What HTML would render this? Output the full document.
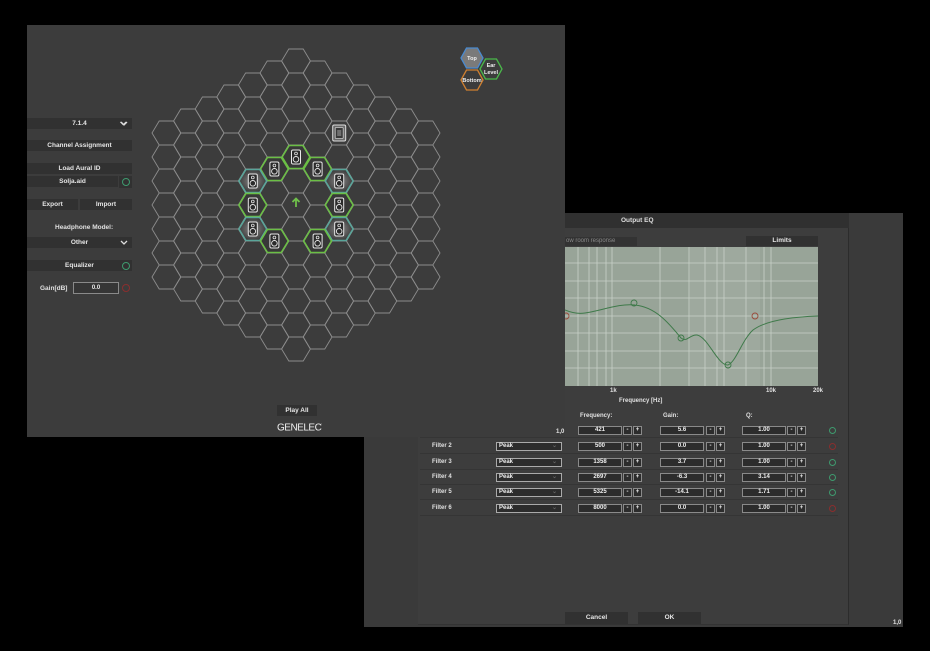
<!DOCTYPE html>
<html><head><meta charset="utf-8"><style>
*{margin:0;padding:0;box-sizing:border-box}
body{width:930px;height:651px;background:#000;position:relative;overflow:hidden;font-family:"Liberation Sans",sans-serif;font-weight:bold;font-size:6.5px;color:#e0e0e0}
.a{position:absolute}
.btn{position:absolute;background:#313131;color:#e6e6e6;text-align:center;line-height:11px;height:11px}
.t{position:absolute;white-space:nowrap}
.in{position:absolute;height:9px;background:#2c2c2c;border:1px solid #8a8a8a;text-align:center;line-height:7px;color:#eee;font-size:6px}
.pm{position:absolute;height:9px;width:9px;background:#2c2c2c;border:1px solid #8a8a8a;text-align:center;line-height:7px;color:#eee;font-size:6px}
.pw{position:absolute;width:8px;height:8px;border:1.3px solid #3e9a6e;border-radius:50%}
.pw.r{border-color:#8a2e2e}
</style></head><body>

<!-- back EQ window -->
<div class="a" style="left:364px;top:213px;width:539px;height:414px;background:#3a3a3a"></div>
<div class="a" style="left:418px;top:213px;width:431px;height:412px;background:#3d3d3d;border-right:1px solid #2c2c2c;border-bottom:1px solid #333"></div>
<div class="a" style="left:418px;top:213px;width:431px;height:15px;background:#303030"></div>
<div class="t" style="left:621px;top:217px">Output EQ</div>
<div class="a" style="left:565px;top:237px;width:72px;height:9px;background:#333"></div>
<div class="t" style="left:566px;top:238px;color:#888;font-weight:normal;font-size:6px">ow room response</div>
<div class="btn" style="left:746px;top:236px;width:72px;height:10px;line-height:10px">Limits</div>
<div class="t" style="left:893px;top:620px;font-size:6px">1,0</div>

<svg class="a" style="left:565px;top:247px" width="253" height="139" viewBox="565 247 253 139">
<rect x="565" y="247" width="253" height="139" fill="#98a498"/>
<rect x="690" y="247" width="70" height="139" fill="#a2ada2" opacity=".6"/>
<g stroke="#c9d1c9" stroke-width="0.8">
<line x1="578" y1="247" x2="578" y2="386"/><line x1="589" y1="247" x2="589" y2="386"/><line x1="597" y1="247" x2="597" y2="386"/><line x1="606" y1="247" x2="606" y2="386"/><line x1="612" y1="247" x2="612" y2="386"/><line x1="660" y1="247" x2="660" y2="386"/><line x1="689" y1="247" x2="689" y2="386"/><line x1="705" y1="247" x2="705" y2="386"/><line x1="717" y1="247" x2="717" y2="386"/><line x1="724" y1="247" x2="724" y2="386"/><line x1="746" y1="247" x2="746" y2="386"/><line x1="764" y1="247" x2="764" y2="386"/><line x1="771" y1="247" x2="771" y2="386"/>
<line x1="565" y1="263" x2="818" y2="263"/><line x1="565" y1="281" x2="818" y2="281"/><line x1="565" y1="298" x2="818" y2="298"/><line x1="565" y1="316" x2="818" y2="316"/><line x1="565" y1="333" x2="818" y2="333"/><line x1="565" y1="351" x2="818" y2="351"/><line x1="565" y1="368" x2="818" y2="368"/>
</g>
<path d="M565 310 C572 313 578 314 585 313 C600 311 620 303 635 305 C655 307 668 322 681 338 C687 343 690 334 697 335 C708 337 718 366 728 365 C736 362 742 340 753 330 C765 321 790 317 818 316" fill="none" stroke="#3f7a4a" stroke-width="1"/>
<g fill="none" stroke-width="0.9">
<circle cx="634" cy="303" r="3" stroke="#3f7a4a"/><circle cx="681" cy="338" r="3" stroke="#3f7a4a"/><circle cx="728" cy="365" r="3" stroke="#3f7a4a"/>
<circle cx="566" cy="316" r="3" stroke="#9a4a3a"/><circle cx="755" cy="316" r="3" stroke="#9a4a3a"/>
</g></svg>
<div class="t" style="left:610px;top:388px;font-size:6px">1k</div>
<div class="t" style="left:766px;top:388px;font-size:6px">10k</div>
<div class="t" style="left:813px;top:388px;font-size:6px">20k</div>
<div class="t" style="left:619px;top:398px;font-size:6px">Frequency [Hz]</div>

<div class="t" style="left:580px;top:413px;font-size:6px">Frequency:</div>
<div class="t" style="left:663px;top:413px;font-size:6px">Gain:</div>
<div class="t" style="left:746px;top:413px;font-size:6px">Q:</div>
<div id="rows"></div>

<div class="btn" style="left:565px;top:612px;width:63px;height:12px">Cancel</div>
<div class="btn" style="left:638px;top:612px;width:63px;height:12px">OK</div>

<!-- front window -->
<div class="a" style="left:27px;top:25px;width:538px;height:412px;background:#3c3c3c"></div>
<div class="btn" style="left:27px;top:118px;width:105px">7.1.4</div>
<div class="t" style="left:120px;top:118px;font-size:8px">&#x2335;</div>
<div class="btn" style="left:27px;top:140px;width:105px">Channel Assignment</div>
<div class="btn" style="left:27px;top:163px;width:105px">Load Aural ID</div>
<div class="btn" style="left:27px;top:176px;width:91px">Solja.aid</div>
<div class="btn" style="left:119px;top:176px;width:13px;height:12px"></div>
<div class="pw" style="left:122px;top:178px"></div>
<div class="btn" style="left:27px;top:199px;width:51px">Export</div>
<div class="btn" style="left:80px;top:199px;width:52px">Import</div>
<div class="t" style="left:55px;top:224px">Headphone Model:</div>
<div class="btn" style="left:27px;top:237px;width:105px">Other</div>
<div class="btn" style="left:27px;top:260px;width:105px">Equalizer</div>
<div class="pw" style="left:122px;top:262px"></div>
<div class="t" style="left:40px;top:285px">Gain[dB]</div>
<div class="in" style="left:73px;top:282px;width:46px;height:12px;line-height:10px;background:#363636">0.0</div>
<div class="pw r" style="left:122px;top:284px"></div>
<svg class="a" style="left:118px;top:118px" width="12" height="140"><path d="M3 4 L6 7 L9 4" fill="none" stroke="#ddd" stroke-width="1.3"/><path d="M3 123 L6 126 L9 123" fill="none" stroke="#ddd" stroke-width="1.3"/></svg>

<svg class="a" style="left:0;top:0" width="565" height="437" id="hex">
<defs><radialGradient id="g1"><stop offset="0" stop-color="#8a8a8a"/><stop offset="1" stop-color="#3c3c3c"/></radialGradient></defs>
<g id="hx" fill="none" stroke="#8c8c8c" stroke-width="0.9"></g>
<g id="sp"></g>
<path d="M296 207 V199 M292.5 202 L296 198.5 L299.5 202" stroke="#6fc04a" stroke-width="1.8" fill="none"/>
<!-- legend -->
<polygon points="461,58 466.5,48 477.5,48 483,58 477.5,68 466.5,68" fill="#7a7a7a" stroke="#4a8ad0" stroke-width="1.3"/>
<polygon points="480,69 485.5,59 496.5,59 502,69 496.5,79 485.5,79" fill="#3c3c3c" stroke="#4ab84a" stroke-width="1.3"/>
<polygon points="461,80 466.5,70 477.5,70 483,80 477.5,90 466.5,90" fill="#3c3c3c" stroke="#d08030" stroke-width="1.3"/>
<text x="472" y="60" font-size="5.5" fill="#eee" text-anchor="middle" font-weight="bold">Top</text>
<text x="491" y="67" font-size="5.5" fill="#eee" text-anchor="middle" font-weight="bold">Ear</text>
<text x="491" y="74" font-size="5.5" fill="#eee" text-anchor="middle" font-weight="bold">Level</text>
<text x="472" y="82" font-size="5.5" fill="#eee" text-anchor="middle" font-weight="bold">Bottom</text>
</svg>
<div class="btn" style="left:277px;top:405px;width:40px">Play All</div>
<div class="t" style="left:277px;top:422px;font-size:10px;font-weight:normal;letter-spacing:-0.5px;color:#eee">GENELEC<sup style="font-size:4px">&#8217;</sup></div>
<div class="t" style="left:556px;top:429px;font-size:6px">1,0</div>

<script>
var NS="http://www.w3.org/2000/svg";
function hp(cx,cy,a,b){return [[cx-a,cy],[cx-a/2,cy-b],[cx+a/2,cy-b],[cx+a,cy],[cx+a/2,cy+b],[cx-a/2,cy+b]].map(function(p){return p[0].toFixed(1)+","+p[1].toFixed(1)}).join(" ")}
var hx=document.getElementById("hx"),sp=document.getElementById("sp");
var dx=21.6,dy=24,cx0=296,cy0=205,A=14.4,B=12;
for(var q=-6;q<=6;q++){var off=(Math.abs(q)%2)?0.5:0;for(var k=-7;k<=7;k++){var y=k+off;if(Math.abs(y)+Math.abs(q)/2<=6.01){var p=document.createElementNS(NS,"polygon");p.setAttribute("points",hp(cx0+q*dx,cy0+y*dy,A,B));hx.appendChild(p);}}}
var S=[[0,-2,"#6bbf45",0],[-1,-1.5,"#6bbf45",0],[1,-1.5,"#6bbf45",0],[-2,-1,"#5aa59a",1],[2,-1,"#5aa59a",1],[-2,0,"#6bbf45",0],[2,0,"#6bbf45",0],[-2,1,"#5aa59a",1],[2,1,"#5aa59a",1],[-1,1.5,"#6bbf45",0],[1,1.5,"#6bbf45",0]];
S.forEach(function(s){var x=cx0+s[0]*dx,y=cy0+s[1]*dy;var p=document.createElementNS(NS,"polygon");p.setAttribute("points",hp(x,y,A-0.5,B-0.5));p.setAttribute("fill",s[3]?"url(#g1)":"#383838");p.setAttribute("stroke",s[2]);p.setAttribute("stroke-width","1.6");sp.appendChild(p);spk(x,y);});
function spk(x,y){var g=document.createElementNS(NS,"g");g.innerHTML='<rect x="'+(x-4.5)+'" y="'+(y-7)+'" width="9" height="14" rx="1.5" fill="#2a2a2a" stroke="#e8e8e8" stroke-width="1"/><circle cx="'+x+'" cy="'+(y-3.5)+'" r="1.4" fill="none" stroke="#e8e8e8" stroke-width="0.8"/><circle cx="'+x+'" cy="'+(y+2.3)+'" r="2.8" fill="none" stroke="#e8e8e8" stroke-width="0.9"/>';sp.appendChild(g);}
var tg=document.createElementNS(NS,"g");var tx=cx0+2*dx,ty=cy0-3*dy;tg.innerHTML='<rect x="'+(tx-6.5)+'" y="'+(ty-8)+'" width="13" height="16" rx="1.5" fill="#6a6a6a" stroke="#ddd" stroke-width="1"/><rect x="'+(tx-4)+'" y="'+(ty-5.5)+'" width="8" height="11" rx="1" fill="#3a3a3a" stroke="#ccc" stroke-width="0.8"/><path d="M'+(tx-2)+' '+(ty-2)+'h4M'+(tx-2)+' '+ty+'h4M'+(tx-2)+' '+(ty+2)+'h4" stroke="#ccc" stroke-width="0.7"/>';sp.appendChild(tg);
var R=[["Filter 1","421","5.6","1.00",0],["Filter 2","500","0.0","1.00",1],["Filter 3","1358","3.7","1.00",0],["Filter 4","2697","-6.3","3.14",0],["Filter 5","5325","-14.1","1.71",0],["Filter 6","8000","0.0","1.00",1]];
var ys=[430,446,462,477,492,508],h="";
R.forEach(function(r,i){var y=ys[i];
h+='<div class="a" style="left:420px;top:'+(y+7)+'px;width:418px;height:1px;background:#353535"></div>';
h+='<div class="t" style="left:432px;top:'+(y-3)+'px;font-size:6px">'+r[0]+'</div>';
h+='<div class="in" style="left:496px;top:'+(y-4)+'px;width:66px;text-align:left;padding-left:2px;border-color:#aaa">'+'Peak<span style="position:absolute;right:4px;color:#666">&#8964;</span></div>';
[[578,r[1],623,633],[660,r[2],706,716],[742,r[3],787,797]].forEach(function(c){h+='<div class="in" style="left:'+c[0]+'px;top:'+(y-4)+'px;width:44px">'+c[1]+'</div><div class="pm" style="left:'+c[2]+'px;top:'+(y-4)+'px">-</div><div class="pm" style="left:'+c[3]+'px;top:'+(y-4)+'px">+</div>';});
h+='<div class="pw'+(r[4]?' r':'')+'" style="left:829px;top:'+(y-3)+'px;width:7px;height:7px"></div>';});
document.getElementById("rows").innerHTML=h;
</script>
</body></html>
